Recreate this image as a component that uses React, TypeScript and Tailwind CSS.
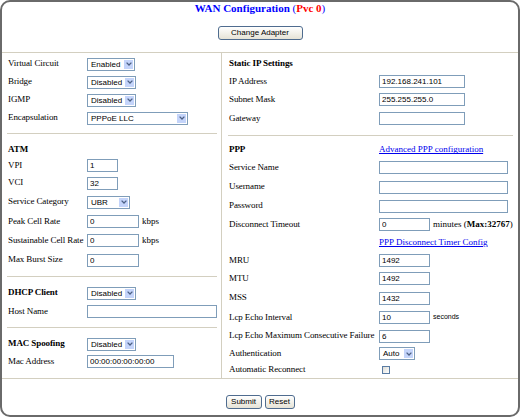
import React from "react";

const sans = "font-['Liberation_Sans',Arial,sans-serif]";

function Sel({ w, value }: { w: string; value: string }) {
  return (
    <div className={`flex h-[13px] items-stretch border border-[#7f9db9] bg-white ${w}`}>
      <span className={`flex-1 pl-[3px] text-[8px] leading-[11px] text-black ${sans}`}>{value}</span>
      <span className="m-[1px] flex w-[9px] items-center justify-center bg-[#c4d4fa]">
        <svg width="6" height="4" viewBox="0 0 6 4">
          <path d="M0.6 0.6 L3 3 L5.4 0.6" stroke="#4d6185" strokeWidth="1.3" fill="none" />
        </svg>
      </span>
    </div>
  );
}

function Inp({ w, value = "" }: { w: string; value?: string }) {
  return (
    <input
      readOnly
      defaultValue={value}
      className={`h-[13px] border border-[#7f9db9] bg-white pl-[2px] text-[8px] leading-[11px] text-black outline-none ${sans} ${w}`}
    />
  );
}

function LRow({ h, label, bold, children }: { h: string; label: string; bold?: boolean; children?: React.ReactNode }) {
  return (
    <div className={`flex items-center ${h}`}>
      <span className={`w-[79px] shrink-0 whitespace-nowrap tracking-[-0.1px] ${bold ? "font-bold" : ""}`}>{label}</span>
      {children}
    </div>
  );
}

function RRow({ h, label, bold, children }: { h: string; label?: string; bold?: boolean; children?: React.ReactNode }) {
  return (
    <div className={`flex items-center ${h}`}>
      <span className={`w-[150px] shrink-0 whitespace-nowrap tracking-[-0.1px] ${bold ? "font-bold" : ""}`}>{label}</span>
      {children}
    </div>
  );
}

function Btn({ children, w }: { children: React.ReactNode; w: string }) {
  return (
    <button
      className={`h-[14px] rounded-[3px] border border-[#4f6c8f] bg-gradient-to-b from-white to-[#e6e3d6] text-[8px] leading-[12px] text-black ${sans} ${w}`}
    >
      {children}
    </button>
  );
}

export default function App() {
  return (
    <div className="h-[417px] w-[520px] bg-white font-['Liberation_Serif','Times_New_Roman',serif] text-[9px] text-black">
      <div className="flex h-full w-full flex-col rounded-[10px] border-2 border-[#6a6a6a]">
        <div className="h-[12px] text-center text-[11px] leading-[12px] text-[#0000ff]">
          <b>WAN Configuration</b> (<b className="text-[#ff0000]">Pvc 0</b>)
        </div>
        <div className="mt-[12px] flex justify-center">
          <Btn w="w-[85px]">Change Adapter</Btn>
        </div>
        <div className="mt-[12px] flex h-[327px] border-y border-[#d3cfc0]">
          {/* left column */}
          <div className="flex w-[220px] flex-col border-r border-[#d3cfc0] pl-[6px] pr-[4px]">
            <div className="mt-[2px]" />
            <LRow h="h-[18px]" label="Virtual Circuit"><Sel w="w-[48px]" value="Enabled" /></LRow>
            <LRow h="h-[18px]" label="Bridge"><Sel w="w-[49px]" value="Disabled" /></LRow>
            <LRow h="h-[18px]" label="IGMP"><Sel w="w-[49px]" value="Disabled" /></LRow>
            <LRow h="h-[18px]" label="Encapsulation"><Sel w="w-[101px]" value="PPPoE LLC" /></LRow>
            <div className="ml-[-1px] mt-[6px] border-t border-[#d3cfc0]" />
            <div className="mt-[9px]" />
            <LRow h="h-[14px]" label="ATM" bold />
            <LRow h="h-[17px]" label="VPI"><Inp w="w-[31px]" value="1" /></LRow>
            <LRow h="h-[18px]" label="VCI"><Inp w="w-[31px]" value="32" /></LRow>
            <LRow h="h-[20px]" label="Service Category"><Sel w="w-[43px]" value="UBR" /></LRow>
            <LRow h="h-[19px]" label="Peak Cell Rate"><Inp w="w-[52px]" value="0" /><span className="ml-[3px]">kbps</span></LRow>
            <LRow h="h-[19px]" label="Sustainable Cell Rate"><Inp w="w-[52px]" value="0" /><span className="ml-[3px]">kbps</span></LRow>
            <LRow h="h-[20px]" label="Max Burst Size"><Inp w="w-[52px]" value="0" /></LRow>
            <div className="ml-[-1px] mt-[6px] border-t border-[#d3cfc0]" />
            <div className="mt-[7px]" />
            <LRow h="h-[18px]" label="DHCP Client" bold><Sel w="w-[49px]" value="Disabled" /></LRow>
            <LRow h="h-[19px]" label="Host Name"><Inp w="w-[130px]" /></LRow>
            <div className="ml-[-1px] mt-[6px] border-t border-[#d3cfc0]" />
            <div className="mt-[7px]" />
            <LRow h="h-[18px]" label="MAC Spoofing" bold><Sel w="w-[49px]" value="Disabled" /></LRow>
            <LRow h="h-[17px]" label="Mac Address"><Inp w="w-[87px]" value="00:00:00:00:00:00" /></LRow>
          </div>
          {/* right column */}
          <div className="flex flex-1 flex-col pl-[7px] pr-[5px]">
            <div className="mt-[2px]" />
            <RRow h="h-[18px]" label="Static IP Settings" bold />
            <RRow h="h-[18px]" label="IP Address"><Inp w="w-[86px]" value="192.168.241.101" /></RRow>
            <RRow h="h-[18px]" label="Subnet Mask"><Inp w="w-[86px]" value="255.255.255.0" /></RRow>
            <RRow h="h-[19px]" label="Gateway"><Inp w="w-[86px]" /></RRow>
            <div className="ml-[-1px] mt-[7px] border-t border-[#d3cfc0]" />
            <div className="mt-[7px]" />
            <RRow h="h-[15px]" label="PPP" bold>
              <a className="text-[#0000ee] underline">Advanced PPP configuration</a>
            </RRow>
            <RRow h="h-[20px]" label="Service Name"><Inp w="w-[129px]" /></RRow>
            <RRow h="h-[19px]" label="Username"><Inp w="w-[129px]" /></RRow>
            <RRow h="h-[19px]" label="Password"><Inp w="w-[129px]" /></RRow>
            <RRow h="h-[19px]" label="Disconnect Timeout">
              <Inp w="w-[51px]" value="0" />
              <span className="ml-[3px] whitespace-nowrap">minutes (<b>Max:32767</b>)</span>
            </RRow>
            <RRow h="h-[17px]">
              <a className="whitespace-nowrap text-[#0000ee] underline">PPP Disconnect Timer Config</a>
            </RRow>
            <RRow h="h-[18px]" label="MRU"><Inp w="w-[51px]" value="1492" /></RRow>
            <RRow h="h-[19px]" label="MTU"><Inp w="w-[51px]" value="1492" /></RRow>
            <RRow h="h-[20px]" label="MSS"><Inp w="w-[51px]" value="1432" /></RRow>
            <RRow h="h-[19px]" label="Lcp Echo Interval">
              <Inp w="w-[51px]" value="10" />
              <span className={`ml-[3px] text-[7px] ${sans}`}>seconds</span>
            </RRow>
            <RRow h="h-[18px]" label="Lcp Echo Maximum Consecutive Failure"><Inp w="w-[51px]" value="6" /></RRow>
            <RRow h="h-[17px]" label="Authentication"><Sel w="w-[36px]" value="Auto" /></RRow>
            <RRow h="h-[16px]" label="Automatic Reconnect">
              <span className="ml-[3px] h-[8px] w-[8px] border border-[#5a7ca3] bg-gradient-to-br from-[#dcdcd6] to-white" />
            </RRow>
          </div>
        </div>
        <div className="mt-[16px] flex justify-center gap-[3px]">
          <Btn w="w-[36px]">Submit</Btn>
          <Btn w="w-[30px]">Reset</Btn>
        </div>
      </div>
    </div>
  );
}
